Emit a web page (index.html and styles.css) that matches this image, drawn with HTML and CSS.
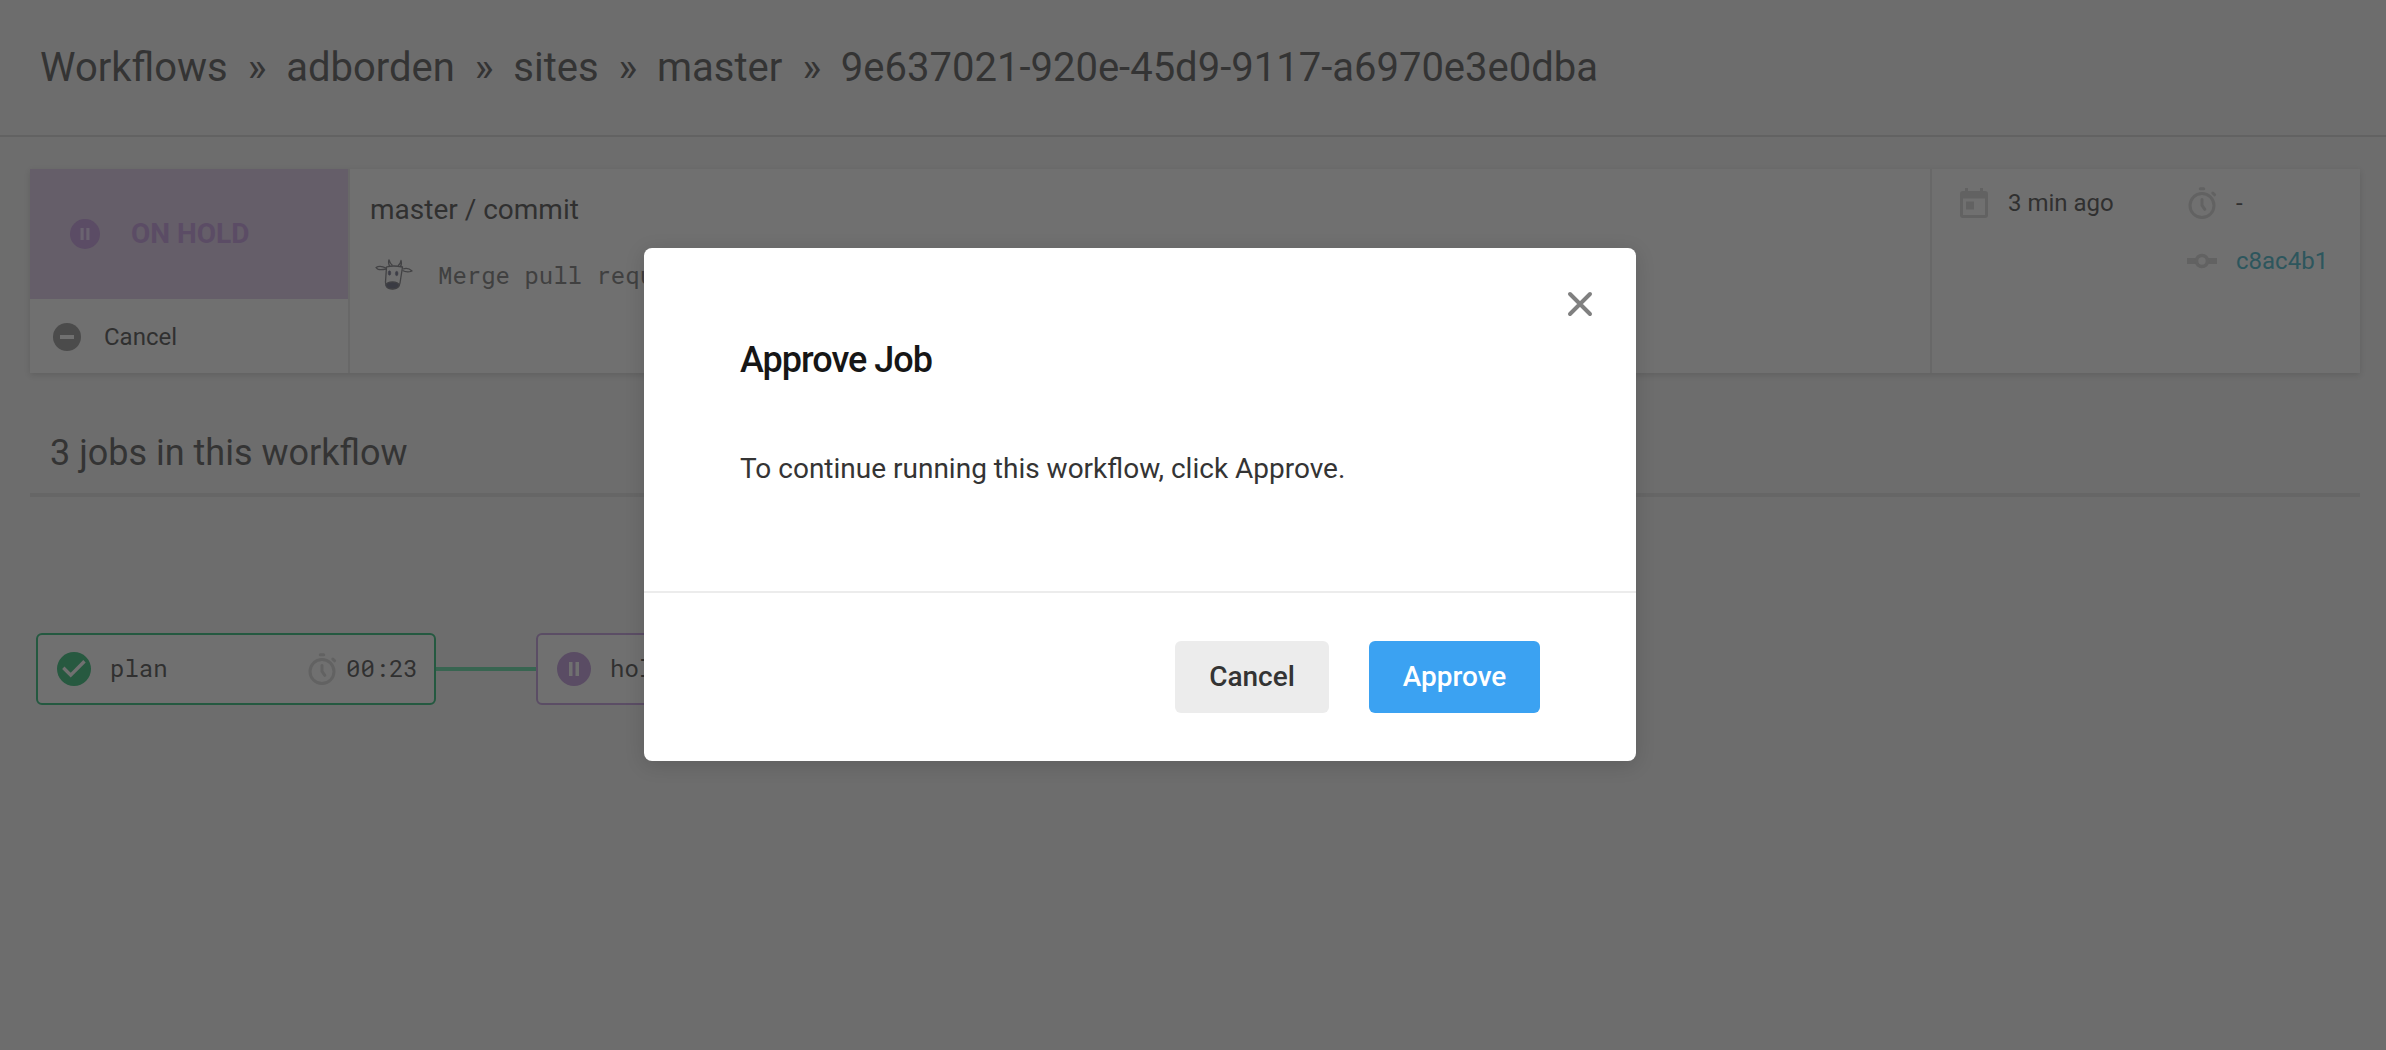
FILE: index.html
```
<!DOCTYPE html>
<html lang="en">
<head>
<meta charset="utf-8">
<title>Workflows</title>
<link rel="stylesheet" href="styles.css">
</head>
<body>
<svg class="sprite" width="0" height="0">
  <symbol id="stopwatch" viewBox="0 0 30 34">
    <circle cx="15" cy="19.5" r="12" fill="none" stroke="currentColor" stroke-width="3"/>
    <path d="M13.3 2.7h3.4M25.8 7l1.8 1.8M15 13.5v5.8l2.8 4" fill="none" stroke="currentColor" stroke-width="3" stroke-linecap="round" stroke-linejoin="round"/>
  </symbol>
</svg>
<header class="topbar">
  <nav class="crumbs"><span>Workflows</span><i>»</i><span>adborden</span><i>»</i><span>sites</span><i>»</i><span>master</span><i>»</i><span>9e637021-920e-45d9-9117-a6970e3e0dba</span></nav>
</header>
<main class="page">
  <section class="card">
    <div class="status">
      <div class="badge">
        <svg width="30" height="30" viewBox="0 0 30 30"><circle cx="15" cy="15" r="15" fill="currentColor"/><path d="M10.500 9h3.200v12h-3.200zM16.300 9h3.200v12h-3.200z" fill="#6a6370"/></svg>
        <strong>ON HOLD</strong>
      </div>
      <div class="cancel">
        <svg width="28" height="28" viewBox="0 0 28 28"><circle cx="14" cy="14" r="14" fill="#4b4b4b"/><path d="M7 12h14v4H7z" fill="#707070"/></svg>
        <span>Cancel</span>
      </div>
    </div>
    <div class="commit">
      <div class="branch">master / commit</div>
      <div class="message">
        <svg class="cow" width="40" height="32" viewBox="0 0 40 32" fill="none" stroke="#424244" stroke-width="1.3" stroke-linejoin="round">
          <path d="M11.500 8Q18 6 27.500 8L25 24Q24 30 17.500 30Q10.500 30 10.500 23Z"/>
          <path d="M11 9Q5 6 1 8.500Q3 12 11 10M28 10Q33 8 37 12Q32 14 27.500 11.500"/>
          <path d="M14.500 7Q13 4 14 0.800Q15 4.500 17.500 6.600M23 6.700Q25.500 5 26 1.500Q27 5 25.500 7.400"/>
          <ellipse cx="14.500" cy="14" rx="1.300" ry="2.200" fill="#3c3d48" stroke="#414148" stroke-width=".6"/>
          <ellipse cx="21.700" cy="14.500" rx="1.300" ry="2.200" fill="#3c3d48" stroke="#414148" stroke-width=".6"/>
          <ellipse cx="17.500" cy="26.300" rx="6.500" ry="3.400" fill="#3a3b43" stroke="#414144"/>
        </svg>
        <span>Merge pull request</span>
      </div>
    </div>
    <div class="meta">
      <svg width="30" height="34" viewBox="0 0 30 34" fill="currentColor"><path fill-rule="evenodd" d="M6 2h3v3h12V2h3v3h2q3 0 3 3v21q0 3-3 3H4q-3 0-3-3V8q0-3 3-3h2zM4 12.500v16.500h22V12.500z"/><path d="M7 15.500h8v8H7z"/></svg>
      <span>3 min ago</span>
      <svg width="30" height="34"><use href="#stopwatch"/></svg>
      <span>-</span>
      <svg class="node-icon" width="30" height="16" viewBox="0 0 30 16"><path d="M0 5h9v6H0zM21 5h9v6h-9z" fill="currentColor"/><circle cx="15" cy="8" r="5.500" fill="none" stroke="currentColor" stroke-width="3.600"/></svg>
      <a class="sha">c8ac4b1</a>
    </div>
  </section>
  <h2 class="jobs-title">3 jobs in this workflow</h2>
  <section class="graph">
    <div class="job passed">
      <svg width="34" height="34" viewBox="0 0 34 34"><circle cx="17" cy="17" r="17" fill="#275940"/><path d="M6.300 15.700l7.400 7.400L27.500 9.300" fill="none" stroke="#707070" stroke-width="3.400"/></svg>
      <span>plan</span>
      <svg class="timer" width="30" height="34"><use href="#stopwatch"/></svg>
      <time>00:23</time>
    </div>
    <div class="link"></div>
    <div class="job held">
      <svg width="34" height="34" viewBox="0 0 34 34"><circle cx="17" cy="17" r="17" fill="#5a4c64"/><path d="M12 10h3.500v14H12zM18.500 10H22v14h-3.500z" fill="#707070"/></svg>
      <span>hold</span>
    </div>
  </section>
</main>
<div class="modal" role="dialog">
  <div class="modal-body">
    <svg class="close" width="26" height="26" viewBox="0 0 26 26"><path d="M3 3l20 20M23 3L3 23" stroke="#808080" stroke-width="4" stroke-linecap="round"/></svg>
    <h1>Approve Job</h1>
    <p>To continue running this workflow, click Approve.</p>
  </div>
  <div class="modal-footer">
    <button class="btn">Cancel</button>
    <button class="btn primary">Approve</button>
  </div>
</div>
</body>
</html>
```

FILE: styles.css
```
* { box-sizing: border-box; }
body {
  margin: 0;
  height: 1050px;
  overflow: hidden;
  position: relative;
  background: #6d6d6d;
  color: #303030;
  font-family: Roboto, "Liberation Sans", sans-serif;
  font-size: 24px;
}
.sprite { position: absolute; }
svg { display: block; flex: none; }

.topbar {
  height: 137px;
  padding: 0 40px;
  border-bottom: 2px solid #626262;
  display: flex;
  align-items: center;
}
.crumbs { display: flex; font-size: 40px; line-height: 48px; color: #343434; white-space: nowrap; }
.crumbs i { font-style: normal; margin: 0 19.7px 0 20px; }

.page { padding: 32px 26px 0 30px; }
.card {
  height: 204px;
  display: grid;
  grid-template-columns: 320px 1fr 430px;
  background: #707070;
  box-shadow: 0 2px 6px rgba(0, 0, 0, .12);
}
.status { border-right: 2px solid #686868; }
.badge {
  height: 130px;
  padding-left: 40px;
  display: flex;
  align-items: center;
  gap: 31px;
  background: #655e69;
  color: #5b4c65;
  font-size: 28px;
}
.badge strong { padding-bottom: 2px; }
.cancel { height: 74px; padding: 2px 0 0 23px; display: flex; align-items: center; gap: 23px; }
.commit { padding: 24px 0 0 20px; }
.branch { font-size: 28px; line-height: 34px; }
.message {
  margin-top: 31px;
  padding-left: 5px;
  display: flex;
  align-items: center;
  gap: 23px;
  font-family: "Roboto Mono", "Liberation Mono", monospace;
  line-height: 36px;
  color: #404040;
}
.message span { padding-bottom: 2px; margin-bottom: -2px; line-height: 34px; }
.meta {
  border-left: 2px solid #686868;
  padding: 16px 0 0 27px;
  display: grid;
  grid-template-columns: 49px 179px 49px 1fr;
  grid-template-rows: 36px 36px;
  row-gap: 22px;
  align-items: center;
  align-content: start;
}
.meta svg { color: #626262; }
.node-icon { grid-column: 3; }
.sha { color: #2d565d; }

.jobs-title {
  margin: 56px 0 0;
  height: 68px;
  padding: 2px 20px 0;
  border-bottom: 4px solid #666;
  font-size: 36px;
  font-weight: 400;
  line-height: 44px;
  color: #343434;
}
.graph { margin: 136px 0 0 6px; display: flex; align-items: center; }
.job {
  width: 400px;
  height: 72px;
  padding: 0 16px 0 19px;
  display: flex;
  align-items: center;
  border: 2px solid #245940;
  border-radius: 6px;
  background: #707070;
  font-family: "Roboto Mono", "Liberation Mono", monospace;
}
.job span { margin-left: 19px; }
.job span, .job time { padding-bottom: 2px; }
.held { border-color: #5b4d65; }
.timer { margin: 0 9px 0 auto; color: #626262; }
.link { width: 100px; height: 4px; background: #386551; }

.modal {
  position: absolute;
  left: 644px;
  top: 248px;
  width: 992px;
  height: 513px;
  border-radius: 8px;
  background: #fff;
  box-shadow: 0 4px 20px rgba(0, 0, 0, .14);
}
.modal-body { position: relative; height: 345px; padding: 90px 97px 0 96px; border-bottom: 2px solid #ececec; }
.close { position: absolute; right: 43px; top: 43px; }
.modal h1 { margin: 0; font-size: 36px; font-weight: 500; line-height: 44px; letter-spacing: -1px; color: #161616; }
.modal p { margin: 67px 0 0; font-size: 28px; line-height: 40px; color: #343434; }
.modal-footer { padding: 48px 96px; display: flex; justify-content: flex-end; gap: 40px; }
.btn {
  width: 154px;
  height: 72px;
  padding: 0;
  border: 0;
  border-radius: 6px;
  background: #ececec;
  color: #343434;
  font: 500 28px/40px Roboto, sans-serif;
}
.primary { width: 171px; background: #3ba2f2; color: #fff; }
```
